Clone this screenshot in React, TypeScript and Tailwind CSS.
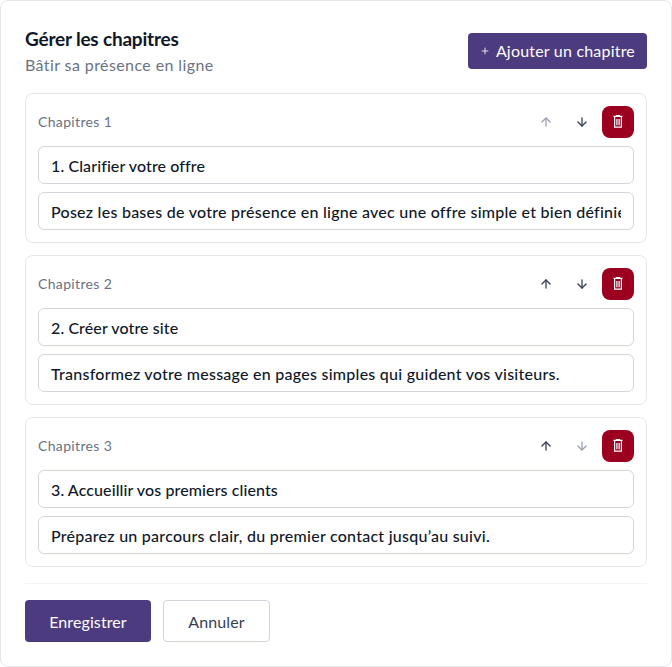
import { ArrowDown, ArrowUp, Plus } from "lucide-react";

const chapters = [
  {
    label: "Chapitres 1",
    title: "1. Clarifier votre offre",
    text: "Posez les bases de votre présence en ligne avec une offre simple et bien définie.",
  },
  {
    label: "Chapitres 2",
    title: "2. Créer votre site",
    text: "Transformez votre message en pages simples qui guident vos visiteurs.",
  },
  {
    label: "Chapitres 3",
    title: "3. Accueillir vos premiers clients",
    text: "Préparez un parcours clair, du premier contact jusqu’au suivi.",
  },
];

function TrashIcon() {
  return (
    <svg width="12" height="14" viewBox="0 0 12 14" fill="none" stroke="currentColor" strokeWidth="1.2">
      <path d="M1.5 1.4h9M4.5 1.4V0.6h3v0.8" />
      <path d="M2.6 1.6v10.6h6.8V1.6" />
      <path d="M4.9 4v6.2M7.1 4v6.2" />
    </svg>
  );
}

function App() {
  return (
    <div className="min-h-[667px] bg-white border border-gray-200 rounded-lg p-6 font-['Lato',sans-serif] text-gray-900">
      <div className="flex items-start justify-between h-[44px]">
        <div>
          <h1 className="text-[19px] leading-7 font-bold tracking-[-0.2px]">Gérer les chapitres</h1>
          <p className="text-base leading-6 tracking-[0.4px] text-gray-500">Bâtir sa présence en ligne</p>
        </div>
        <button className="flex items-center gap-1.5 h-9 mt-2 px-3 rounded bg-[#4d3b7f] text-white text-base tracking-[0.2px]">
          <Plus size={10} />
          Ajouter un chapitre
        </button>
      </div>

      <div className="flex flex-col gap-3 mt-6">
        {chapters.map((c, i) => (
          <div key={c.label} className="border border-gray-200 rounded-lg p-3 h-[150px]">
            <div className="flex items-center justify-between h-8">
              <span className="text-sm tracking-[0.35px] text-gray-500">{c.label}</span>
              <div className="flex items-center gap-1">
                <button className={"w-8 h-8 flex items-center justify-center " + (i === 0 ? "text-gray-400" : "text-gray-700")}>
                  <ArrowUp size={14} strokeWidth={2.25} />
                </button>
                <button className={"w-8 h-8 flex items-center justify-center " + (i === 2 ? "text-gray-400" : "text-gray-700")}>
                  <ArrowDown size={14} strokeWidth={2.25} />
                </button>
                <button className="w-8 h-8 flex items-center justify-center rounded-lg bg-[#9b001f] text-white">
                  <TrashIcon />
                </button>
              </div>
            </div>
            <input readOnly value={c.title} className="block w-full h-[38px] mt-2 px-3 border border-gray-300 rounded-md text-base font-medium tracking-[0.1px] outline-none" />
            <input readOnly value={c.text} className="block w-full h-[38px] mt-2 px-3 border border-gray-300 rounded-md text-base font-medium tracking-[0.25px] outline-none" />
          </div>
        ))}
      </div>

      <div className="flex gap-3 mt-4 pt-4 border-t border-gray-100">
        <button className="w-[126px] h-[42px] pt-[1px] rounded bg-[#4d3b7f] text-white text-base tracking-[0.1px]">Enregistrer</button>
        <button className="w-[107px] h-[42px] pt-[1px] rounded border border-gray-300 text-gray-700 text-base tracking-[0.1px]">Annuler</button>
      </div>
    </div>
  );
}

export default App;
